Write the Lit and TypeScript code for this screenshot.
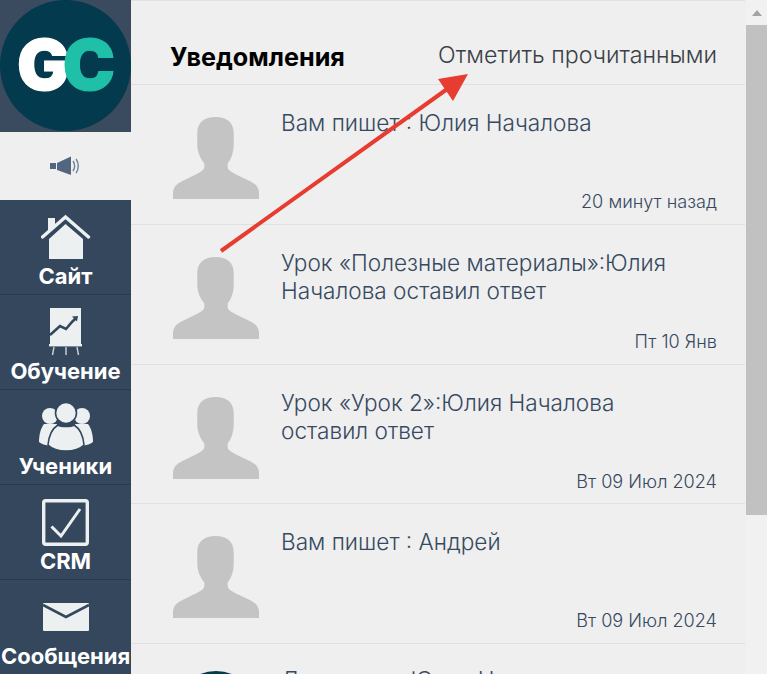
import { LitElement, css, html, svg } from 'lit';
import { customElement } from 'lit/decorators.js';

const icons = {
	site: svg`<svg width="50" height="47" viewBox="0 0 50 47">
		<path d="M7 4h7v9l-7 6z" fill="#edf0f1"/>
		<path d="M1.500 23 24.500 3l23 20" fill="none" stroke="#edf0f1" stroke-width="3.400" stroke-linecap="round"/>
		<path d="M8 25 24.500 10 42 25v20H8z" fill="#edf0f1"/>
	</svg>`,
	study: svg`<svg width="34" height="48" viewBox="0 0 34 48">
		<rect x="1" y="0" width="31" height="37" fill="#edf0f1"/>
		<path d="M1 27 11 18l6 3 6-7 4-4" fill="none" stroke="#34475d" stroke-width="2.600"/>
		<path d="M29 8l-6 .5 5 5z" fill="#34475d"/>
		<rect x="0" y="36" width="33" height="2.400" fill="#edf0f1"/>
		<path d="M5 39 3.500 47M17 39v8M28 39l1.500 8" fill="none" stroke="#cdd3d8" stroke-width="1.400"/>
	</svg>`,
	students: svg`<svg width="54" height="48" viewBox="0 0 54 48">
		<g fill="#edf0f1">
			<circle cx="11" cy="13" r="8"/>
			<circle cx="43" cy="13" r="8"/>
			<path d="M5 21c-3 4-5 10-5 18 2 2 6 3 12 4l6-22z"/>
			<path d="M49 21c3 4 5 10 5 18-2 2-6 3-12 4l-6-22z"/>
		</g>
		<g fill="#edf0f1" stroke="#34475d" stroke-width="1.600">
			<circle cx="27" cy="10" r="10.500"/>
			<path d="M19 22c3 2 13 2 16 0 5 3 9 9 10 20-4 4-11 6-18 6s-14-2-18-6c1-11 5-17 10-20z"/>
		</g>
	</svg>`,
	crm: svg`<svg width="47" height="47" viewBox="0 0 47 47">
		<rect x="1.700" y="1.700" width="43.600" height="43.600" rx="2" fill="none" stroke="#edf0f1" stroke-width="3.400"/>
		<path d="M9.500 27.500 19 37 38 10" fill="none" stroke="#edf0f1" stroke-width="3"/>
	</svg>`,
	mail: svg`<svg width="46" height="28" viewBox="0 0 46 28">
		<rect width="46" height="28" rx="1" fill="#edf0f1"/>
		<path d="M0 2 23 14 46 2" fill="none" stroke="#34475d" stroke-width="2.600"/>
	</svg>`,
};

const menu = [
	{ label: 'Сайт', icon: icons.site },
	{ label: 'Обучение', icon: icons.study },
	{ label: 'Ученики', icon: icons.students },
	{ label: 'CRM', icon: icons.crm },
	{ label: 'Сообщения', icon: icons.mail },
];

const rows = [
	{ title: 'Вам пишет : Юлия Началова', date: '20 минут назад' },
	{ title: 'Урок «Полезные материалы»:Юлия Началова оставил ответ', date: 'Пт 10 Янв' },
	{ title: 'Урок «Урок 2»:Юлия Началова оставил ответ', date: 'Вт 09 Июл 2024' },
	{ title: 'Вам пишет : Андрей', date: 'Вт 09 Июл 2024' },
];

const avatar = svg`<svg class="avatar" width="86" height="83" viewBox="0 0 85 82">
	<path d="M42 0C31 0 24 5 24 16v11c0 8 3 14 7 19v4c-1 4-7 6-15 10C8 64 1 66 0 74v7h85v-7c-1-8-8-10-16-14-8-4-14-6-15-10v-4c4-5 6-11 6-19V16C60 5 53 0 42 0z" fill="#c4c4c4"/>
</svg>`;

@customElement('app-root')
export class AppRoot extends LitElement {
	static styles = css`
		:host {
			display: flex;
			position: relative;
			height: 674px;
			overflow: hidden;
			background: #efefef;
			font-family: Inter, 'Noto Sans', sans-serif;
		}

		.side {
			width: 131px;
			flex: none;
			background: #34475d;
		}

		.logo {
			height: 132px;
			background: #3a4a5f;
		}

		.logo svg,
		.avatar {
			display: block;
		}

		.sound {
			height: 68px;
			display: flex;
			align-items: center;
			justify-content: center;
			background: #efefef;
		}

		.item {
			height: 95px;
			box-sizing: border-box;
			padding-top: 13px;
			border-bottom: 1px solid #2a3b4e;
			color: #fff;
			text-align: center;
			font-size: 22px;
			font-weight: 700;
			white-space: nowrap;
		}

		.icon {
			height: 48px;
			display: flex;
			align-items: center;
			justify-content: center;
		}

		.label {
			line-height: 30px;
		}

		.main {
			width: 614px;
			flex: none;
			border-top: 1px solid #e0e0e0;
			color: #36495f;
		}

		.head {
			height: 84px;
			box-sizing: border-box;
			padding: 0 28px 12px 39px;
			display: flex;
			align-items: flex-end;
			justify-content: space-between;
			border-bottom: 1px solid #e0e0e0;
		}

		h1 {
			margin: 0;
			color: #000;
			font-size: 25.2px;
			font-weight: 700;
			line-height: 30px;
		}

		.read {
			color: #3a3f48;
			font-size: 23.2px;
			font-weight: 300;
			line-height: 30px;
			margin-bottom: 2px;
		}

		.row {
			height: 139.75px;
			box-sizing: border-box;
			padding: 24px 28px 0 42px;
			display: grid;
			grid-template-columns: 86px 1fr;
			column-gap: 22px;
			border-bottom: 1px solid #e0e0e0;
		}

		.avatar {
			margin-top: 8px;
		}

		.body {
			display: flex;
			flex-direction: column;
			justify-content: space-between;
			height: 104px;
		}

		.title {
			max-width: 410px;
			font-size: 22.6px;
			font-weight: 300;
			line-height: 28px;
		}

		.date {
			text-align: right;
			font-size: 18.1px;
			font-weight: 300;
			line-height: 24px;
		}

		.last .avatar {
			margin-top: 3px;
		}

		.last .body {
			margin-top: -2px;
		}

		.bar {
			width: 21px;
			flex: none;
			margin-left: 1px;
			background: #f1f1f1;
		}

		.up {
			height: 25px;
			display: flex;
			justify-content: center;
			padding-top: 10px;
			box-sizing: border-box;
		}

		.up i {
			border: 5.5px solid transparent;
			border-top: 0;
			border-bottom: 6px solid #a3a3a3;
			height: 0;
		}

		.thumb {
			height: 490px;
			background: #c1c1c1;
		}

		.arrow {
			position: absolute;
			left: 0;
			top: 0;
			pointer-events: none;
		}
	`;

	render() {
		return html`
			<nav class="side">
				<div class="logo">
					<svg width="131" height="132" viewBox="0 0 131 132">
						<circle cx="65.5" cy="65.5" r="65.5" fill="#033a4d"/>
						<text x="17" y="90" font-family="Inter" font-weight="900" font-size="70" stroke-width="1.2"><tspan fill="#fff" stroke="#fff">G</tspan><tspan dx="-7" fill="#1fbfa8" stroke="#1fbfa8">C</tspan></text>
					</svg>
				</div>
				<div class="sound">
					<svg width="32" height="20" viewBox="0 0 32 20">
						<path d="M0 7h6v6H0zM7 7l14-6.500V19L7 14z" fill="#50677f"/>
						<path d="M23 5c2 3 2 7 0 10M26 3c3 4 3 10 0 14" fill="none" stroke="#6f8397" stroke-width="1.400"/>
					</svg>
				</div>
				${menu.map(
					(m) => html`<div class="item">
						<div class="icon">${m.icon}</div>
						<div class="label">${m.label}</div>
					</div>`,
				)}
			</nav>
			<section class="main">
				<header class="head">
					<h1>Уведомления</h1>
					<span class="read">Отметить прочитанными</span>
				</header>
				${rows.map(
					(r) => html`<div class="row">
						${avatar}
						<div class="body">
							<div class="title">${r.title}</div>
							<div class="date">${r.date}</div>
						</div>
					</div>`,
				)}
				<div class="row last">
					<svg class="avatar" width="86" height="86" viewBox="0 0 86 86"><circle cx="43" cy="43" r="43" fill="#033a4d"/></svg>
					<div class="body"><div class="title">Доступ от : Юлия Началова</div></div>
				</div>
			</section>
			<div class="bar">
				<div class="up"><i></i></div>
				<div class="thumb"></div>
			</div>
			<svg class="arrow" width="767" height="674" viewBox="0 0 767 674">
				<path d="M221 251 450 87" stroke="#e73c30" stroke-width="4" fill="none"/>
				<path d="M468 74 438 79 453 101z" fill="#e73c30"/>
			</svg>
		`;
	}
}
